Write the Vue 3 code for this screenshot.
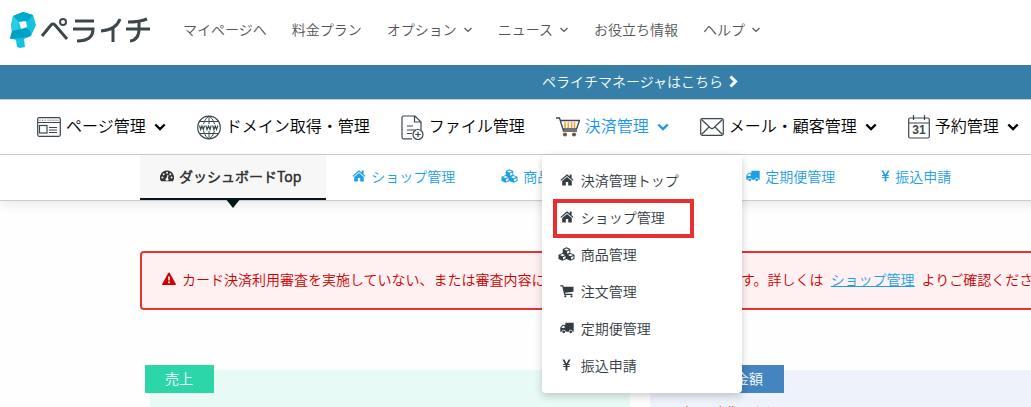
<script setup>
const topLinks = [
  { label: 'マイページへ' },
  { label: '料金プラン' },
  { label: 'オプション', more: true },
  { label: 'ニュース', more: true },
  { label: 'お役立ち情報' },
  { label: 'ヘルプ', more: true },
]

const mainLinks = [
  { label: 'ページ管理', icon: 'page', more: true },
  { label: 'ドメイン取得・管理', icon: 'www' },
  { label: 'ファイル管理', icon: 'file' },
  { label: '決済管理', icon: 'basket', more: true, active: true },
  { label: 'メール・顧客管理', icon: 'mail', more: true },
  { label: '予約管理', icon: 'calendar', more: true },
]

const tabs = [
  { label: 'ショップ管理', icon: 'home' },
  { label: '商品管理', icon: 'cubes' },
  { label: '注文管理', icon: 'cart' },
  { label: '定期便管理', icon: 'truck' },
  { label: '振込申請', icon: 'yen' },
]

const menu = [
  { label: '決済管理トップ', icon: 'home' },
  { label: 'ショップ管理', icon: 'home', marked: true },
  { label: '商品管理', icon: 'cubes' },
  { label: '注文管理', icon: 'cart' },
  { label: '定期便管理', icon: 'truck' },
  { label: '振込申請', icon: 'yen' },
]

const glyphs = {
  home: {
    w: 14,
    d: 'M7 1.3 0.4 6.9l.8.9L7 3l5.8 4.8.8-.9-2-1.7V1.6H9.700v2zM7 4 2.200 8v4.500h3.600V9h2.400v3.500h3.600V8z',
  },
  cubes: {
    w: 17,
    d: 'M8.500.3 12.300 1.900v4.100l4.200 1.700v4.200l-4 1.900-4-1.900-4 1.900-4-1.900V7.700L4.700 6V1.900zM8.500 1.400 6 2.400l2.500 1.100L11 2.400zM9 4.500v2.200L11.400 5.700V3.500zM4.500 7 2 8.100l2.500 1.100L7 8.100zM5 10.200v2.300l2.500-1.200V9.100zM12.500 7 10 8.100l2.500 1.100L15 8.100zM13 10.200v2.300l2.500-1.200V9.100z',
  },
  cart: {
    w: 14,
    d: 'M.3 1.300h2.900l.4 1.400h9.900v5L5 8.800l.3 1h7.200v1.100H4.200L2.300 2.400h-2zM5.300 11.200a1.100 1.100 0 1 1 0 2.200 1.100 1.100 0 0 1 0-2.200zM11.500 11.200a1.100 1.100 0 1 1 0 2.200 1.100 1.100 0 0 1 0-2.200z',
  },
  truck: {
    w: 14,
    d: 'M5.400 1.800h8.300v8.900h-1.100a1.900 1.900 0 0 0-3.800 0H5.600a1.900 1.900 0 0 0-3.800 0H.3V6.400l2.300-2.600h2.800zM4.600 4.800H3L1.500 6.600v.5h3.100zM3.700 9.400a1.400 1.400 0 1 1 0 2.800 1.400 1.400 0 0 1 0-2.800zM10.700 9.400a1.400 1.400 0 1 1 0 2.800 1.400 1.400 0 0 1 0-2.800z',
  },
  yen: {
    w: 9,
    d: 'M.4 1.500h1.900l2.200 4 2.200-4h1.900L6.100 6h1.700v1H5.400v1h2.400v1H5.400v3.500H3.600V9H1.200V8h2.400V7H1.200V6h1.700z',
  },
}
</script>

<template>
  <div class="viewport">
    <div class="page">
      <header class="top">
        <a class="logo" href="#" aria-label="ペライチ">
          <svg class="mark" width="27" height="37" viewBox="0 0 27 37" aria-hidden="true">
            <path fill="#14c3df" d="M3 4 13 0l10 3 3 10-5 11-7 3 1 8-5 1-3-1-1-7-6-2 2-6-1-7z" />
            <path fill="#00a9ce" d="M3 4 13 0l10 3-6 7-9-1z" />
            <path fill="#27cde4" d="m1 13 2-9 5 5 1 8-7 3z" />
            <path fill="#00a0c4" d="m2 19 14-3 4 3 1 5-10 2-11 1z" />
            <path fill="#fff" d="m9 10 7-1 1 6-6 2z" />
          </svg>
          <svg class="word" width="111" height="27" viewBox="0 0 111 27" aria-hidden="true">
            <g fill="none" stroke="#3c474d" stroke-width="3">
              <path d="M2 19 11 8q2-2 4 0l12 14" />
              <circle cx="23" cy="5" r="3" stroke-width="2" />
              <path d="M35 4h19M33 12h20q0 12-16 12" />
              <path d="M80 2q-4 11-19 12M73 11v14" />
              <path d="M107 2q-7 3-19 3M86 12h24M99 4v8q0 11-9 12" />
            </g>
          </svg>
        </a>
        <nav class="top-nav">
          <a v-for="l in topLinks" :key="l.label" href="#">
            {{ l.label }}
            <svg v-if="l.more" width="10" height="8" viewBox="0 0 10 8" aria-hidden="true">
              <path d="m1.500 3 3.500 3.500L8.500 3" fill="none" stroke="currentColor" stroke-width="1.200" />
            </svg>
          </a>
        </nav>
      </header>

      <a class="banner" href="#">
        ペライチマネージャはこちら
        <svg width="9" height="13" viewBox="0 0 9 13" aria-hidden="true">
          <path d="m1.500 1.500 5 5-5 5" fill="none" stroke="currentColor" stroke-width="3" />
        </svg>
      </a>

      <nav class="main-nav">
        <div v-for="l in mainLinks" :key="l.label" class="main-item">
          <a href="#" :class="{ active: l.active }">
            <svg v-if="l.icon === 'page'" width="24" height="20" viewBox="0 0 24 20" class="line" aria-hidden="true">
              <rect x=".7" y=".7" width="22.600" height="18.600" rx="1.500" />
              <path d="M1 5.500h22M2.500 3.200h1M5 3.200h1M7.500 3.200h1M12 10.500h8M12 13h8M12 15.500h8" stroke-width="1" />
              <path d="M10 3.200h12" stroke="#aaa" stroke-width="1" />
              <rect x="2.500" y="8.500" width="7.500" height="7.500" />
            </svg>
            <svg v-else-if="l.icon === 'www'" width="24" height="25" viewBox="0 0 24 25" class="line" aria-hidden="true">
              <circle cx="12" cy="12.500" r="11.300" />
              <path d="M12 1v8M12 16v8M3 6.500h18M3 18.500h18M6.500 9Q8 3 12 1q4 2 5.500 8M6.500 16q1.500 6 5.500 8 4-2 5.500-8" stroke-width="1" />
              <path d="m2.500 10.500 1.200 4 1.300-3.500 1.300 3.500 1.200-4M8.800 10.500l1.200 4 1.500-3.500 1.500 3.500 1.200-4M15.700 10.500l1.200 4 1.300-3.500 1.300 3.500 1.400-4" />
            </svg>
            <svg v-else-if="l.icon === 'file'" width="23" height="25" viewBox="0 0 23 25" class="line" aria-hidden="true">
              <path d="M11 23.800H2.500Q1 23.800 1 22V2.500Q1 1 2.500 1H14l6 6v8M13.500 1v6H20M6 11h6M6 15h9M6 18.500h5" />
              <circle cx="17" cy="19.500" r="5" />
              <path d="M17 16.700v5.600M14.200 19.500h5.600" />
            </svg>
            <svg v-else-if="l.icon === 'basket'" width="24" height="20" viewBox="0 0 24 20" class="line" aria-hidden="true">
              <path d="M0 1h3.500l4 13H21M4.500 3.500h19L20.500 12H7" stroke-width="1.300" />
              <path d="M9 5v6M12.300 5v6M15.600 5v6M18.500 5v6" stroke="#f3a43b" stroke-width="1.600" />
              <circle cx="9" cy="17.500" r="1.500" fill="#3c474d" stroke="#8b6232" />
              <circle cx="18" cy="17.500" r="1.500" fill="#3c474d" stroke="#8b6232" />
            </svg>
            <svg v-else-if="l.icon === 'mail'" width="24" height="18" viewBox="0 0 24 18" class="line" aria-hidden="true">
              <rect x=".7" y=".7" width="22.600" height="16.600" rx="1.500" />
              <path d="m1.500 1.500 9 8.500q1.500 1.200 3 0l9-8.500M1.500 16.500 9 9M22.500 16.500 15 9" />
            </svg>
            <svg v-else width="22" height="24" viewBox="0 0 22 24" class="line" aria-hidden="true">
              <rect x=".7" y="3" width="20.600" height="20" rx="1.500" />
              <path d="M1 8h20M5.500 0v5M16.500 0v5" />
              <text x="11" y="19">31</text>
            </svg>
            <span>{{ l.label }}</span>
            <svg v-if="l.more" class="more" width="12" height="8" viewBox="0 0 12 8" aria-hidden="true">
              <path d="m1.300 1.500 4.700 4.500 4.700-4.500" fill="none" stroke="currentColor" stroke-width="2.400" />
            </svg>
          </a>
          <div v-if="l.active" class="menu">
            <a v-for="m in menu" :key="m.label" href="#" :class="{ marked: m.marked }">
              <svg :width="glyphs[m.icon].w" height="14" :viewBox="`0 0 ${glyphs[m.icon].w} 14`" aria-hidden="true">
                <path :d="glyphs[m.icon].d" fill="currentColor" fill-rule="evenodd" />
              </svg>
              <span>{{ m.label }}</span>
            </a>
          </div>
        </div>
      </nav>

      <div class="sub">
        <nav class="container tabs">
          <a href="#" class="current" aria-current="page">
            <svg width="14" height="14" viewBox="0 0 14 14" aria-hidden="true">
              <path fill="currentColor" d="M7 1.500a7 7 0 0 0-5.900 10.800h11.800A7 7 0 0 0 7 1.500z" />
              <path d="M7 10.500 8 6" stroke="#f7f7f7" stroke-width="1.200" />
              <g fill="#f7f7f7">
                <circle cx="7" cy="10.300" r="1.500" />
                <circle cx="2.400" cy="8.500" r="1" />
                <circle cx="3.700" cy="5.200" r="1" />
                <circle cx="7" cy="3.800" r="1" />
                <circle cx="10.300" cy="5.200" r="1" />
                <circle cx="11.600" cy="8.500" r="1" />
              </g>
            </svg>
            ダッシュボードTop
          </a>
          <div class="tab-list">
            <a v-for="t in tabs" :key="t.label" href="#">
              <svg :width="glyphs[t.icon].w" height="14" :viewBox="`0 0 ${glyphs[t.icon].w} 14`" aria-hidden="true">
                <path :d="glyphs[t.icon].d" fill="currentColor" fill-rule="evenodd" />
              </svg>
              {{ t.label }}
            </a>
          </div>
        </nav>
      </div>

      <main class="container">
        <p class="alert" role="alert">
          <svg width="14" height="14" viewBox="0 0 14 14" aria-hidden="true">
            <path fill="currentColor" fill-rule="evenodd" d="M7 .5q.5 0 .8.500l6 11q.5 1-.6 1H.8q-1.100 0-.6-1l6-11Q6.500.5 7 .5zM6 4.500l.3 4h1.400l.3-4zM6.100 9.500v1.700h1.800V9.500z" />
          </svg>
          <span>カード決済利用審査を実施していない、または審査内容に不備があり、再度申請が必要です。詳しくは&ensp;<a href="#">ショップ管理</a>&ensp;よりご確認ください。</span>
        </p>
        <div class="cards">
          <section class="card sales">
            <h2>売上</h2>
          </section>
          <section class="card transfer">
            <h2>振込予定の金額</h2>
            <p>商品が購入されていません</p>
          </section>
        </div>
      </main>
    </div>
  </div>
</template>

<style>
body {
  margin: 0;
}
</style>

<style scoped>
.viewport {
  height: 100vh;
  overflow: hidden;
  background: #fefefe;
  color: #333c42;
  font: 350 14px/20px "Noto Sans CJK JP DemiLight", "Noto Sans CJK JP", sans-serif;
}
.page {
  min-width: 1280px;
}
a {
  color: inherit;
  text-decoration: none;
  white-space: nowrap;
}
svg {
  flex: none;
}
.top {
  display: flex;
  align-items: center;
  height: 65px;
  background: #fff;
}
.logo {
  display: flex;
  align-items: center;
  gap: 3px;
  margin: 0 32px 5px 10px;
}
.top-nav {
  display: flex;
  gap: 25px;
  margin-bottom: 8px;
  color: #555;
}
.top-nav a {
  display: flex;
  align-items: center;
  gap: 6px;
}
.banner {
  display: flex;
  align-items: center;
  justify-content: center;
  gap: 6px;
  box-sizing: border-box;
  height: 35px;
  padding-bottom: 2px;
  border-bottom: 1px solid #ccc;
  background: #367fa9;
  color: #fff;
}
.main-nav {
  display: flex;
  gap: 31px;
  height: 54px;
  padding-left: 37px;
  border-bottom: 1px solid #ccc;
  background: #fff;
  color: #000;
  font-size: 16px;
}
.main-item {
  position: relative;
  display: flex;
}
.main-item > a {
  display: flex;
  align-items: center;
  gap: 5px;
}
.main-item > a > span {
  padding-bottom: 4px;
}
.main-item > .active {
  color: #1e96f0;
}
.more {
  margin-left: 3px;
}
.line {
  fill: none;
  stroke: #3c474d;
  stroke-width: 1.200;
}
.line text {
  fill: #3c474d;
  stroke: none;
  font: bold 12px "Liberation Sans", sans-serif;
  text-anchor: middle;
}
.menu {
  position: absolute;
  z-index: 2;
  top: 55px;
  left: -14px;
  box-sizing: border-box;
  width: 200px;
  padding: 7px 11px 9px;
  border-radius: 4px;
  background: #fff;
  box-shadow: 0 3px 8px rgba(0, 0, 0, 0.2);
  color: #333c42;
  font-size: 14px;
}
.menu a {
  position: relative;
  display: grid;
  grid-template-columns: 20px auto;
  align-items: center;
  justify-content: start;
  gap: 4px;
  box-sizing: border-box;
  width: 141px;
  height: 37px;
  padding: 0 4px 2px;
}
.menu svg {
  justify-self: center;
}
.menu .marked::after {
  content: "";
  position: absolute;
  inset: 0 0 -2px;
  border: 4px solid #e92f2f;
}
.sub {
  border-bottom: 1px solid #ccc;
  background: #fff;
  box-shadow: 0 4px 10px rgba(0, 0, 0, 0.08);
}
.container {
  width: 1000px;
  margin: 0 auto;
}
.tabs {
  display: flex;
  gap: 26px;
  height: 45px;
  color: #1ea0e6;
}
.tabs a {
  display: flex;
  align-items: center;
  gap: 5px;
  padding-bottom: 3px;
}
.tab-list {
  display: flex;
  gap: 46px;
}
.tabs .current {
  position: relative;
  box-sizing: border-box;
  padding: 0 25px 1px 20px;
  border-bottom: 2px solid #04181c;
  background: #f7f7f7;
  color: #333;
  font-weight: bold;
}
.current::after {
  content: "";
  position: absolute;
  top: 100%;
  left: 50%;
  margin-left: -8px;
  border: 8px solid transparent;
  border-top: 10px solid #04181c;
  border-bottom: 0;
}
.alert {
  display: flex;
  align-items: center;
  gap: 6px;
  margin: 50px 0 60px;
  padding: 16px 20px 19px;
  border: 2px solid #e53232;
  border-radius: 4px;
  background: #fff1f1;
  color: #c00;
  white-space: nowrap;
}
.alert a {
  color: #1ea0e6;
  text-decoration: underline;
}
.cards {
  display: grid;
  grid-template-columns: 1fr 1fr;
  gap: 20px;
  padding: 0 10px;
}
.card {
  position: relative;
  min-height: 200px;
}
.sales {
  background: #e8faf6;
}
.transfer {
  background: #edf2fb;
}
.card h2 {
  position: absolute;
  top: -5px;
  left: -5px;
  margin: 0;
  padding: 0 21px 2px 20px;
  color: #fff;
  font-size: 14px;
  font-weight: inherit;
  line-height: 26px;
}
.sales h2 {
  background: #2dd6a9;
}
.transfer h2 {
  background: #4484c1;
}
.card p {
  margin: 0;
  padding: 32px 30px;
  color: #c00;
}
</style>
